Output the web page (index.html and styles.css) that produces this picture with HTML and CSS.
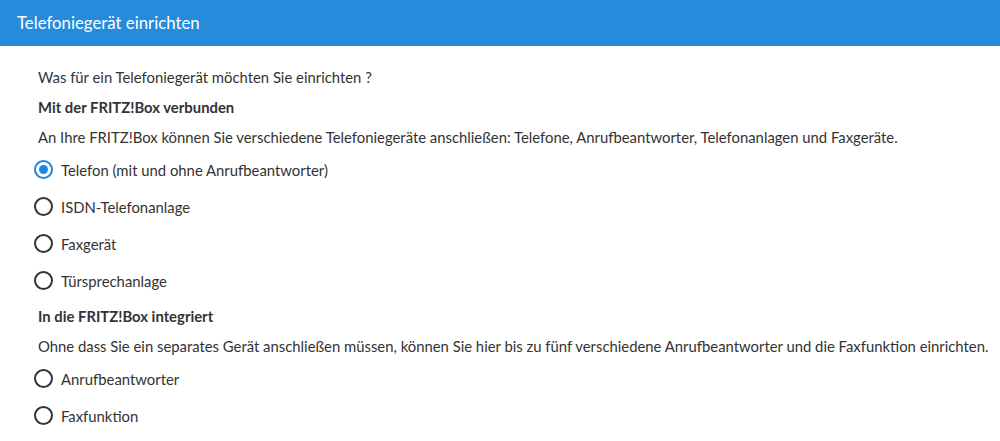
FILE: index.html
```html
<!DOCTYPE html>
<html lang="de">

<head>
    <meta charset="UTF-8">
    <meta name="viewport" content="width=device-width, initial-scale=1.0">
    <title>Telefoniegerät einrichten</title>
    <link rel="stylesheet" href="styles.css">
</head>

<body>
    <div class="title_bar">Telefoniegerät einrichten</div>
    <div class="content">
        <p class="question">Was für ein Telefoniegerät möchten Sie einrichten ?</p>

        <p class="group_head">Mit der FRITZ!Box verbunden</p>
        <p class="group_text">An Ihre FRITZ!Box können Sie verschiedene Telefoniegeräte anschließen: Telefone, Anrufbeantworter, Telefonanlagen und Faxgeräte.</p>
        <div class="choices">
            <label class="choice"><input type="radio" name="device" value="fon" checked> Telefon (mit und ohne Anrufbeantworter)</label>
            <label class="choice"><input type="radio" name="device" value="isdn"> ISDN-Telefonanlage</label>
            <label class="choice"><input type="radio" name="device" value="fax"> Faxgerät</label>
            <label class="choice"><input type="radio" name="device" value="door"> Türsprechanlage</label>
        </div>

        <p class="group_head second">In die FRITZ!Box integriert</p>
        <p class="group_text">Ohne dass Sie ein separates Gerät anschließen müssen, können Sie hier bis zu fünf verschiedene Anrufbeantworter und die Faxfunktion einrichten.</p>
        <div class="choices">
            <label class="choice"><input type="radio" name="device" value="tam"> Anrufbeantworter</label>
            <label class="choice"><input type="radio" name="device" value="faxintern"> Faxfunktion</label>
        </div>
    </div>
</body>

</html>
```

FILE: styles.css
```css
body {
    margin: 0;
    background: white;
    font-family: Lato, "Open Sans", sans-serif;
    font-size: 14.85px;
    color: #333;
}

.title_bar {
    background: #258bdd;
    color: white;
    font-size: 16.8px;
    height: 46px;
    line-height: 45px;
    padding-left: 17px;
}

.content {
    padding: 21px 0 0 38px;
}

.content p {
    margin: 0 0 10px 0;
    line-height: 20px;
}

.group_head {
    font-weight: bold;
}

.group_head.second {
    margin-top: 7px;
}

.choices {
    margin-top: -6px;
    margin-left: -4px;
}

.choice {
    display: flex;
    align-items: center;
    gap: 8px;
    height: 37px;
}

.choice input {
    appearance: none;
    margin: 0;
    width: 19px;
    height: 19px;
    border: 2px solid #333;
    border-radius: 50%;
    display: flex;
    align-items: center;
    justify-content: center;
}

.choice input:checked {
    border-color: #1f86e0;
}

.choice input:checked::after {
    content: "";
    width: 9px;
    height: 9px;
    border-radius: 50%;
    background: #1f86e0;
}
```
